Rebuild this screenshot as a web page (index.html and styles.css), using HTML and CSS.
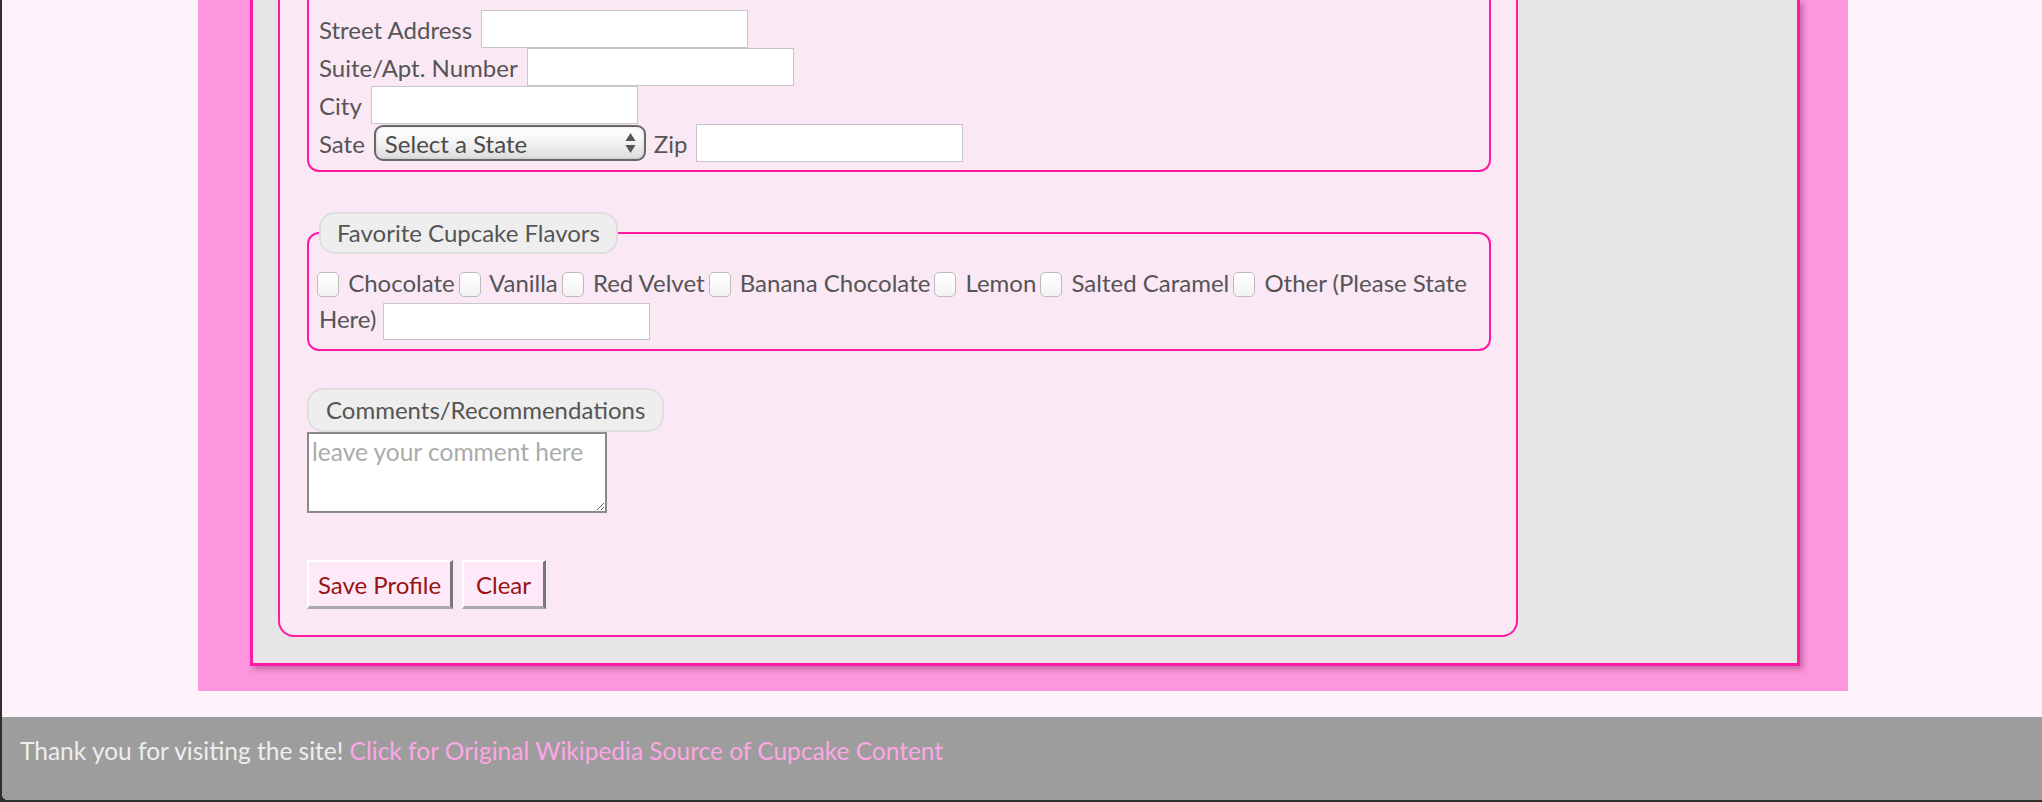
FILE: index.html
```html
<!DOCTYPE html>
<html lang="en">
<head>
<meta charset="utf-8">
<title>Cupcake Profile</title>
<link rel="stylesheet" href="styles.css">
</head>
<body>
<div class="window">
  <main class="column">
    <div class="card">
      <form class="profile">
        <fieldset class="address">
          <div class="row"><label class="lbl">Street Address</label><input type="text" class="field"></div>
          <div class="row"><label class="lbl">Suite/Apt. Number</label><input type="text" class="field"></div>
          <div class="row"><label class="lbl">City</label><input type="text" class="field"></div>
          <div class="row">
            <label class="lbl">Sate</label>
            <span class="select-wrap">
              <select class="select"><option>Select a State</option></select>
              <svg class="select-arrows" width="11" height="22" viewBox="0 0 11 22"><path d="M5.5 1 L10.5 9 L0.5 9 Z M5.5 21 L10.5 13 L0.5 13 Z" fill="#555"/></svg>
            </span>
            <label class="lbl zip">Zip</label><input type="text" class="field">
          </div>
        </fieldset>

        <fieldset class="flavors">
          <legend class="tag">Favorite Cupcake Flavors</legend>
          <p class="choices"><input type="checkbox" class="check"> Chocolate<input type="checkbox" class="check"> Vanilla<input type="checkbox" class="check"> Red Velvet<input type="checkbox" class="check"> Banana Chocolate<input type="checkbox" class="check"> Lemon<input type="checkbox" class="check"> Salted Caramel<input type="checkbox" class="check"> Other (Please State Here) <input type="text" class="field inline-field"></p>
        </fieldset>

        <div class="comments">
          <div class="tag comments-tag">Comments/Recommendations</div>
          <textarea class="comment-box" placeholder="leave your comment here"></textarea>
        </div>

        <div class="actions">
          <button type="button" class="btn save">Save Profile</button>
          <button type="button" class="btn clear">Clear</button>
        </div>
      </form>
    </div>
  </main>
  <footer class="footer">Thank you for visiting the site! <a class="footer-link" href="#">Click for Original Wikipedia Source of Cupcake Content</a></footer>
</div>
</body>
</html>
```

FILE: styles.css
```css
html, body {
  margin: 0;
  padding: 0;
}

body {
  background: #2f2f2f;
  font-family: Lato, "Open Sans", sans-serif;
  height: 802px;
  overflow: hidden;
  color: #555;
}

.window {
  margin-left: 2px;
  height: 800px;
  background: #fff3fb;
  display: flex;
  flex-direction: column;
  border-bottom-left-radius: 6px;
  overflow: hidden;
}

.column {
  margin-left: 196px;
  width: 1650px;
  box-sizing: border-box;
  background: #fd96dd;
  padding: 0 48px 25px 52px;
}

.card {
  background: #e7e5e6;
  border: 3px solid #ff19a3;
  border-top: none;
  box-shadow: 3px 3px 6px rgba(90, 20, 60, 0.35);
  padding: 0 0 26px 25px;
}

.profile {
  width: 1240px;
  box-sizing: border-box;
  background: #fbe8f5;
  border: 2px solid #ff19a3;
  border-top: none;
  border-radius: 0 0 16px 16px;
  padding: 0 25px 26px 27px;
}

.address {
  margin: 0;
  border: 2px solid #ff19a3;
  border-top: none;
  border-radius: 0 0 12px 12px;
  padding: 10px 10px 8px 10px;
}

.row {
  display: flex;
  align-items: center;
  height: 38px;
}

.lbl {
  font-size: 24px;
  color: #555;
  margin-right: 9px;
}

.zip {
  margin-left: 8px;
}

.field {
  width: 267px;
  height: 38px;
  box-sizing: border-box;
  border: 1px solid #c6c6c6;
  background: #fff;
  margin: 0;
  font-size: 20px;
}

.select-wrap {
  position: relative;
  display: inline-block;
}

.select {
  appearance: none;
  -webkit-appearance: none;
  width: 272px;
  height: 36px;
  box-sizing: border-box;
  border: 2px solid #686868;
  border-radius: 9px;
  background: linear-gradient(#ffffff 0%, #f4f4f4 45%, #dcdcdc 100%);
  box-shadow: inset 0 0 3px rgba(0, 0, 0, 0.15);
  font-family: Lato, "Open Sans", sans-serif;
  font-size: 24px;
  color: #4a4a4a;
  padding: 0 0 0 9px;
  margin: 0;
  display: block;
}

.select-arrows {
  position: absolute;
  right: 10px;
  top: 7px;
  pointer-events: none;
}

.flavors {
  margin: 40px 0 0;
  border: 2px solid #ff19a3;
  border-radius: 12px;
  padding: 0 10px 9px 10px;
}

.tag {
  display: inline-block;
  box-sizing: border-box;
  height: 42px;
  line-height: 38px;
  padding: 0 16px;
  background: #eeeeee;
  border: 2px solid #dedede;
  border-radius: 16px;
  font-size: 24px;
  color: #555;
}

.choices {
  margin: 0;
  padding-top: 11px;
  font-size: 24px;
  line-height: 36px;
  color: #555;
  text-indent: -6px;
}

.check {
  appearance: none;
  -webkit-appearance: none;
  width: 22px;
  height: 25px;
  box-sizing: border-box;
  border: 1px solid #bcbcbc;
  border-radius: 5px;
  background: linear-gradient(#ffffff, #f3f3f3);
  vertical-align: -5px;
  margin: 0 3px 0 4px;
}

.inline-field {
  height: 37px;
  vertical-align: middle;
}

.comments {
  margin-top: 37px;
}

.comments-tag {
  display: block;
  width: max-content;
  height: 44px;
  line-height: 40px;
  padding: 0 17px;
}

.comment-box {
  display: block;
  width: 300px;
  height: 81px;
  box-sizing: border-box;
  margin: 0;
  border: 2px solid #8a8a8a;
  padding: 3px 3px;
  font-family: Lato, "Open Sans", sans-serif;
  font-size: 24.5px;
  line-height: 30px;
  background: #fff;
}

.comment-box::placeholder {
  color: #ababab;
}

.actions {
  margin-top: 47px;
  display: flex;
  gap: 9px;
}

.btn {
  height: 49px;
  box-sizing: border-box;
  background: #fde9f8;
  color: #9a1212;
  font-family: Lato, "Open Sans", sans-serif;
  font-size: 24px;
  white-space: nowrap;
  border-style: solid;
  border-width: 2px 3px 3px 2px;
  border-color: #ffffff #777777 #aaaaaa #ffffff;
  padding: 0 6px;
  margin: 0;
}

.save {
  width: 146px;
}

.clear {
  width: 84px;
}

.footer {
  margin-top: auto;
  height: 83px;
  box-sizing: border-box;
  background: #9d9d9d;
  padding: 20px 0 0 18px;
  font-size: 24.5px;
  line-height: 28px;
  color: #eeeeee;
}

.footer-link {
  color: #ffa6e4;
  text-decoration: none;
}
```
